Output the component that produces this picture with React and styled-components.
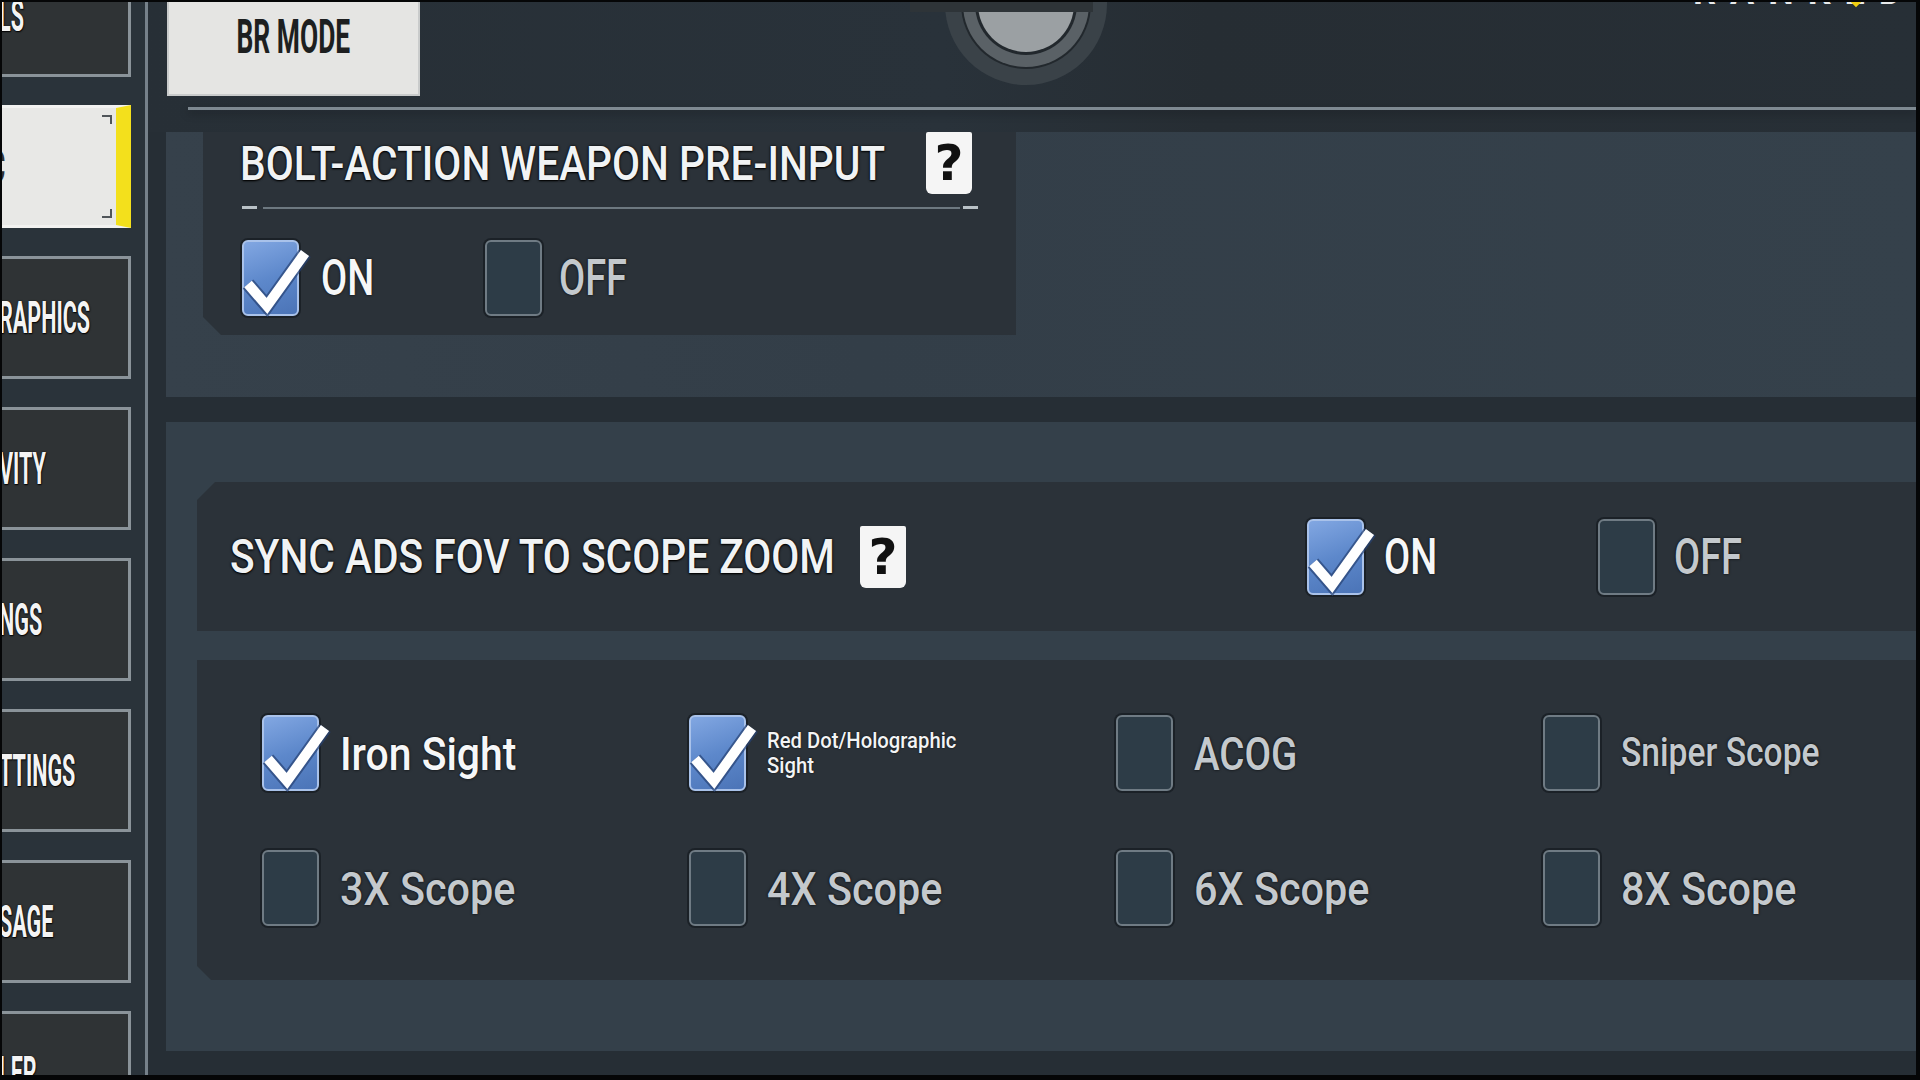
import React from 'react';
import styled, { createGlobalStyle, css } from 'styled-components';

const GlobalStyle = createGlobalStyle`
  * { box-sizing: border-box; }
  html, body { margin: 0; padding: 0; background: #000; }
  body { font-family: Roboto, "Noto Sans", sans-serif; }
`;

const Frame = styled.div`
  width: 1920px;
  height: 1080px;
  background: #050607;
  padding: 2px 4px 5px 2px;
  overflow: hidden;
`;

const Screen = styled.div`
  position: relative;
  display: flex;
  width: 100%;
  height: 100%;
  overflow: hidden;
  background: #262e35;
`;

const Sidebar = styled.nav`
  width: 146px;
  flex-shrink: 0;
  display: flex;
  flex-direction: column;
  gap: 28px;
  background: #2a333a;
  border-right: 3px solid #76818a;
  overflow: hidden;
  > :first-child { margin-top: -48px; }
`;

const NavItem = styled.div`
  position: relative;
  flex-shrink: 0;
  width: 129px;
  height: 123px;
  display: flex;
  align-items: center;
  overflow: hidden;
  background: #2f3335;
  border: 3px solid #8a9399;
  border-left: none;
  ${p => p.$active && css`
    background: #e8e8e6;
    border-color: #f2f2f0;
    border-right: 15px solid #f3e01c;
    &::before, &::after {
      content: '';
      position: absolute;
      right: 4px;
      width: 8px;
      height: 7px;
      border-right: 2px solid #50555a;
    }
    &::before { top: 7px; border-top: 2px solid #50555a; }
    &::after { bottom: 7px; border-bottom: 2px solid #50555a; }
  `}
`;

const NavText = styled.span`
  display: inline-block;
  white-space: nowrap;
  font-weight: 700;
  font-size: 44px;
  line-height: 1;
  color: ${p => (p.$active ? '#2f3133' : '#f4f4f4')};
  text-shadow: ${p => (p.$active ? 'none' : '0 0 2px #000, 1px 1px 2px #000')};
  transform: scaleX(0.49);
  transform-origin: left center;
  margin-left: ${p => p.$shift || -3}px;
`;

const Main = styled.main`
  flex: 1;
  min-width: 0;
  display: flex;
  flex-direction: column;
`;

const TopBar = styled.header`
  position: relative;
  flex-shrink: 0;
  height: 130px;
  background: linear-gradient(90deg, #272f36 0%, #29323a 45%, #262d33 60%, #272f36 100%);
`;

const Tab = styled.div`
  width: 253px;
  height: 94px;
  margin-left: 19px;
  padding-bottom: 22px;
  display: flex;
  align-items: center;
  justify-content: center;
  background: #e5e5e3;
  border: 2px solid #c9cbcb;
  border-top: none;
`;

const TabText = styled.span`
  display: inline-block;
  white-space: nowrap;
  font-weight: 700;
  font-size: 48px;
  line-height: 1;
  color: #1d1f20;
  transform: scaleX(0.55);
`;

const Rule = styled.div`
  height: 3px;
  margin: 11px 0 0 40px;
  background: #7e8991;
  box-shadow: 0 3px 8px rgba(0, 0, 0, 0.35);
`;

const Knob = styled.svg`
  position: absolute;
  left: 750px;
  top: 0;
`;

const RankText = styled.span`
  position: absolute;
  left: 1545px;
  top: -31px;
  font-weight: 700;
  font-size: 36px;
  letter-spacing: 14px;
  color: #e8eaec;
  white-space: nowrap;
`;

const RankGem = styled.span`
  position: absolute;
  left: 1700px;
  top: -14px;
  width: 16px;
  height: 16px;
  background: #f1cf12;
  transform: rotate(45deg);
`;

const Section = styled.section`
  flex-shrink: 0;
  margin-left: 18px;
  background: #333e48;
  ${p => p.$first ? css`
    height: 265px;
    background: linear-gradient(90deg, #36414b 0%, #333e48 40%, #35414b 100%);
  ` : css`
    height: 629px;
    margin-top: 25px;
    padding: 60px 0 0 31px;
    display: flex;
    flex-direction: column;
    gap: 29px;
    background: #34404a;
  `}
`;

const BoltPanel = styled.div`
  width: 813px;
  height: 203px;
  margin-left: 37px;
  padding-left: 37px;
  display: flex;
  flex-direction: column;
  background: #2b3239;
  clip-path: polygon(0 0, 100% 0, 100% 100%, 18px 100%, 0 calc(100% - 18px));
`;

const TitleRow = styled.div`
  display: flex;
  align-items: center;
  height: 62px;
`;

const TitleWrap = styled.div`
  width: ${p => p.$w}px;
  flex-shrink: 0;
`;

const Title = styled.span`
  display: inline-block;
  white-space: nowrap;
  font-weight: 500;
  font-size: 49px;
  line-height: 1;
  color: #f1f3f4;
  text-shadow: 0 0 3px #000, 0 1px 2px #000;
  transform: scaleX(0.83);
  transform-origin: left center;
`;

const Help = styled.div`
  flex-shrink: 0;
  width: 46px;
  height: 62px;
  display: flex;
  align-items: center;
  justify-content: center;
  background: #f5f5f5;
  border-radius: 2px 2px 6px 6px;
  font-family: "DejaVu Sans", sans-serif;
  font-weight: 700;
  font-size: 50px;
  line-height: 1;
  color: #111;
`;

const Underline = styled.div`
  display: flex;
  align-items: center;
  margin: 12px 0 0 2px;
  height: 3px;
`;

const Dash = styled.span`
  width: 15px;
  height: 3px;
  background: #b9c1c6;
`;

const Stroke = styled.span`
  width: 697px;
  height: 2px;
  margin: 0 3px 0 6px;
  background: #6d7880;
`;

const OptionGroup = styled.div`
  display: grid;
  grid-template-columns: ${p => p.$first}px auto;
  align-items: center;
  margin-top: ${p => p.$top || 0}px;
  margin-left: ${p => p.$left || 0}px;
`;

const Option = styled.div`
  display: flex;
  align-items: center;
  gap: ${p => p.$gap || 20}px;
`;

const Box = styled.div`
  position: relative;
  flex-shrink: 0;
  width: 57px;
  height: 76px;
  border-radius: 6px;
  border: 2px solid ${p => (p.$on ? '#a9c2ea' : '#6f7b84')};
  background: ${p => (p.$on
    ? 'linear-gradient(160deg, #82a7e2 0%, #5d88cb 50%, #4b74b7 100%)'
    : '#2d3c47')};
  box-shadow: 0 0 0 2px rgba(15, 20, 25, 0.55);
`;

const Tick = styled.svg`
  position: absolute;
  left: -2px;
  top: -2px;
  overflow: visible;
`;

const OptionText = styled.span`
  display: inline-block;
  white-space: nowrap;
  font-weight: 500;
  font-size: ${p => p.$size || 50}px;
  line-height: 1;
  color: ${p => (p.$on ? '#f6f7f8' : '#c4c9cd')};
  text-shadow: 0 0 3px rgba(0, 0, 0, 0.9);
  transform: scaleX(${p => p.$sx || 0.76});
  transform-origin: left center;
`;

const SmallText = styled.span`
  display: inline-block;
  white-space: pre-line;
  font-weight: 500;
  font-size: 22px;
  line-height: 25px;
  color: #f3f4f5;
  text-shadow: 0 0 2px rgba(0, 0, 0, 0.9);
  transform: scaleX(0.92);
  transform-origin: left center;
`;

const SyncRow = styled.div`
  flex-shrink: 0;
  height: 149px;
  padding-left: 33px;
  display: flex;
  align-items: center;
  background: #2b3239;
  clip-path: polygon(18px 0, 100% 0, 100% 100%, 0 100%, 0 18px);
`;

const ScopeGrid = styled.div`
  flex-shrink: 0;
  height: 320px;
  padding: 55px 0 0 65px;
  display: grid;
  grid-template-columns: repeat(4, 427px);
  row-gap: 59px;
  align-content: start;
  background: #2b3239;
  clip-path: polygon(0 0, 100% 0, 100% 100%, 14px 100%, 0 calc(100% - 14px));
`;

const Check = ({ on }) => (
  <Box $on={on}>
    {on && (
      <Tick width="57" height="76" viewBox="0 0 57 76">
        <path d="M6 44 L25 66 L63 13" fill="none" stroke="rgba(38,66,115,0.7)" strokeWidth="14" />
        <path d="M6 44 L25 66 L63 13" fill="none" stroke="#ffffff" strokeWidth="10" />
      </Tick>
    )}
  </Box>
);

const nav = [
  { t: 'LS' },
  { t: 'C', active: true, shift: -11 },
  { t: 'RAPHICS' },
  { t: 'VITY' },
  { t: 'NGS' },
  { t: 'TTINGS' },
  { t: 'SAGE' },
  { t: 'LER' },
];

const scopes = [
  { label: 'Iron Sight', on: true, sx: 0.87, size: 47 },
  { label: 'Red Dot/Holographic\nSight', on: true, small: true },
  { label: 'ACOG', sx: 0.82, size: 47 },
  { label: 'Sniper Scope', sx: 0.84, size: 40 },
  { label: '3X Scope', sx: 0.88, size: 47 },
  { label: '4X Scope', sx: 0.88, size: 47 },
  { label: '6X Scope', sx: 0.88, size: 47 },
  { label: '8X Scope', sx: 0.88, size: 47 },
];

const App = () => (
  <Frame>
    <GlobalStyle />
    <Screen>
      <Sidebar>
        {nav.map((n, i) => (
          <NavItem key={i} $active={n.active}>
            <NavText $active={n.active} $shift={n.shift}>{n.t}</NavText>
          </NavItem>
        ))}
      </Sidebar>

      <Main>
        <TopBar>
          <Tab>
            <TabText>BR MODE</TabText>
          </Tab>
          <Rule />
          <Knob width="220" height="96" viewBox="0 0 220 96">
            <circle cx="128" cy="2" r="81" fill="#3a4248" />
            <circle cx="128" cy="2" r="65" fill="#22282d" />
            <circle cx="128" cy="2" r="63" fill="#5a6166" />
            <circle cx="128" cy="2" r="51" fill="#22282d" />
            <circle cx="128" cy="2" r="48" fill="#9ba0a3" />
            <rect x="12" y="0" width="183" height="10" fill="#2e3438" />
          </Knob>
          <RankText>RANKED</RankText>
          <RankGem />
        </TopBar>

        <Section $first>
          <BoltPanel>
            <TitleRow>
              <TitleWrap $w={686}>
                <Title>BOLT-ACTION WEAPON PRE-INPUT</Title>
              </TitleWrap>
              <Help>?</Help>
            </TitleRow>
            <Underline>
              <Dash />
              <Stroke />
              <Dash />
            </Underline>
            <OptionGroup $first={243} $top={31} $left={2}>
              <Option $gap={22}>
                <Check on />
                <OptionText $on>ON</OptionText>
              </Option>
              <Option $gap={17}>
                <Check />
                <OptionText>OFF</OptionText>
              </Option>
            </OptionGroup>
          </BoltPanel>
        </Section>

        <Section>
          <SyncRow>
            <TitleWrap $w={630}>
              <Title>SYNC ADS FOV TO SCOPE ZOOM</Title>
            </TitleWrap>
            <Help>?</Help>
            <OptionGroup $first={291} $left={401}>
              <Option $gap={20}>
                <Check on />
                <OptionText $on>ON</OptionText>
              </Option>
              <Option $gap={19}>
                <Check />
                <OptionText>OFF</OptionText>
              </Option>
            </OptionGroup>
          </SyncRow>

          <ScopeGrid>
            {scopes.map(s => (
              <Option key={s.label} $gap={21}>
                <Check on={s.on} />
                {s.small ? (
                  <SmallText>{s.label}</SmallText>
                ) : (
                  <OptionText $on={s.on} $sx={s.sx} $size={s.size}>{s.label}</OptionText>
                )}
              </Option>
            ))}
          </ScopeGrid>
        </Section>
      </Main>
    </Screen>
  </Frame>
);

export default App;
